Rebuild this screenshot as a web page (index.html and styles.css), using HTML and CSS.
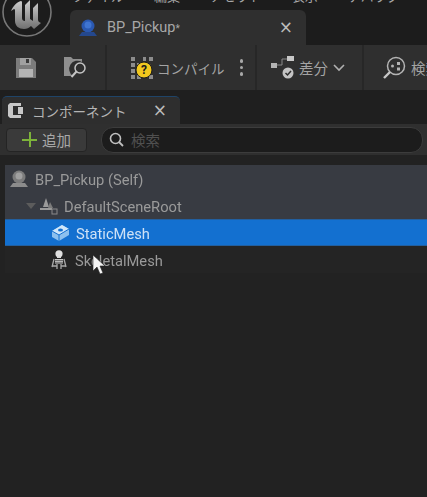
FILE: index.html
```html
<!DOCTYPE html>
<html lang="ja">

<head>
    <meta charset="UTF-8">
    <title>BP_Pickup</title>
    <link rel="stylesheet" href="styles.css">
</head>

<body>
    <!-- タイトルバー -->
    <div class="titlebar">
        <div class="logo">
            <svg width="52" height="52" viewBox="0 0 52 52">
                <defs>
                    <linearGradient id="logo_grad" x1="0" y1="0" x2="0" y2="1">
                        <stop offset="0" stop-color="#d0d0d0" />
                        <stop offset="1" stop-color="#707070" />
                    </linearGradient>
                </defs>
                <circle cx="26" cy="26" r="24" fill="#1c1c1c" stroke="#777777" stroke-width="1.600" />
                <path d="M20 15c-4 1-8 5-10 10l3-2c1 0 1 1 1 2v10c0 5 4 8 9 8 3 0 5-1 7-3l3 3 7-6-2-1c-1-1-1-2-1-3V17l-5 5v13l-3-2V14l-5 5v16c-2 0-3-1-3-3V17c0-1 0-2-1-2z" fill="url(#logo_grad)" />
            </svg>
        </div>
        <div class="menu">
            <span>ファイル</span><span>編集</span><span>アセット</span><span>表示</span><span>デバッグ</span>
        </div>
        <div class="doc_tab">
            <svg width="20" height="20" viewBox="0 0 20 20">
                <circle cx="10" cy="8" r="6.500" fill="#2a58b0" />
                <circle cx="10" cy="7" r="3.500" fill="#3f74d0" />
                <path d="M4 14h12l3 4H1z" fill="#24488e" />
            </svg>
            <span class="doc_name">BP_Pickup<small>*</small></span>
            <span class="close">×</span>
        </div>
    </div>

    <!-- ツールバー -->
    <div class="toolbar">
        <div class="tool_group first">
            <svg width="22" height="22" viewBox="0 0 22 22">
                <path d="M1 1h16l4 4v16H1z" fill="#7c7c7c" />
                <rect x="5" y="1" width="11" height="7" fill="#a0a0a0" />
                <rect x="11" y="2" width="3" height="4" fill="#3a3a3a" />
                <rect x="4" y="12" width="14" height="8" fill="#b4b4b4" />
            </svg>
            <svg width="25" height="23" viewBox="0 0 25 23">
                <path d="M1 1h7l2 2h9v3a8 8 0 0 0-9 14H1z" fill="#8f8f8f" />
                <circle cx="17" cy="12" r="5" fill="none" stroke="#c4c4c4" stroke-width="1.500" />
                <path d="M13.500 15.500l-5 5.500" stroke="#c4c4c4" stroke-width="2" />
            </svg>
        </div>
        <div class="tool_group compile">
            <svg class="compile_icon" width="24" height="24" viewBox="0 0 24 24">
                <path d="M1 1h4v4H1zM13 1h3v4h-3zM19 1h4v4h-4zM7 7h4v4H7zM1 7h4v4H1zM1 13h4v4H1zM1 19h4v4H1zM7 19h4v4H7zM19 19h4v4h-4z" fill="#8c8c8c" />
                <circle cx="14" cy="14" r="8" fill="#f2c81e" stroke="#1c1c1c" />
                <text x="14" y="18" class="q_mark">?</text>
            </svg>
            <span class="tool_text">コンパイル</span>
            <span class="dots"><i></i><i></i><i></i></span>
        </div>
        <div class="tool_group diff">
            <svg width="25" height="23" viewBox="0 0 25 23">
                <rect x="1" y="7" width="6" height="5" fill="#b4b4b4" />
                <rect x="17" y="0" width="7" height="5" fill="#c8c8c8" />
                <path d="M7 9h5V3h5" fill="none" stroke="#8a8a8a" />
                <circle cx="18" cy="17" r="5.500" fill="#c4c4c4" />
                <path d="M15.500 17l2 2 3.500-4" fill="none" stroke="#2f2f2f" stroke-width="1.500" />
            </svg>
            <span class="tool_text">差分</span>
            <svg class="chevron" width="12" height="8" viewBox="0 0 12 8">
                <path d="M1 1l5 5 5-5" fill="none" stroke="#b0b0b0" stroke-width="1.600" />
            </svg>
        </div>
        <div class="tool_group find">
            <svg width="23" height="24" viewBox="0 0 23 24">
                <circle cx="13" cy="10" r="8.500" fill="none" stroke="#b4b4b4" stroke-width="1.500" />
                <path d="M7 16l-6 6" stroke="#c8c8c8" stroke-width="2.400" />
                <circle cx="9.500" cy="10" r="1.500" fill="#b4b4b4" />
                <rect x="14" y="6" width="3" height="3" fill="#b4b4b4" />
                <rect x="14" y="11.500" width="3" height="3" fill="#b4b4b4" />
            </svg>
            <span class="tool_text">検索</span>
        </div>
    </div>

    <!-- コンポーネントパネル -->
    <div class="panel_tabs">
        <div class="panel_tab">
            <svg width="17" height="17" viewBox="0 0 17 17">
                <path d="M1 3l2-2h11v3H6v9h8v3H3l-2-2z" fill="#c8c8c8" />
                <rect x="11" y="5" width="5" height="7" fill="#c8c8c8" />
            </svg>
            <span class="panel_title">コンポーネント</span>
            <span class="close">×</span>
        </div>
    </div>
    <div class="search_row">
        <button class="add_btn"><span class="plus"></span>追加</button>
        <div class="search_box">
            <svg width="15" height="15" viewBox="0 0 15 15">
                <circle cx="6.500" cy="6.500" r="5" fill="none" stroke="#c0c0c0" stroke-width="1.600" />
                <path d="M10 10l4 4" stroke="#c0c0c0" stroke-width="1.800" />
            </svg>
            <span class="placeholder">検索</span>
        </div>
    </div>

    <!-- ツリー -->
    <div class="tree">
        <div class="row self">
            <svg width="20" height="20" viewBox="0 0 20 20">
                <circle cx="10" cy="8" r="6.500" fill="#7c7c7c" />
                <circle cx="10" cy="7" r="3.500" fill="#a0a0a0" />
                <path d="M4 14h12l3 4H1z" fill="#8c8c8c" />
            </svg>
            <span>BP_Pickup (Self)</span>
        </div>
        <div class="row root">
            <span class="arrow"></span>
            <svg width="18" height="18" viewBox="0 0 18 18">
                <path d="M6 1l3 9H3z" fill="#9a9a9a" />
                <path d="M10 5l3 6H8z" fill="#7c7c7c" />
                <rect x="0" y="11" width="12" height="2" fill="#9a9a9a" />
                <rect x="12" y="12" width="5" height="5" fill="none" stroke="#8a8a8a" />
            </svg>
            <span>DefaultSceneRoot</span>
        </div>
        <div class="row mesh selected">
            <svg width="19" height="18" viewBox="0 0 19 18">
                <path d="M1 7l10-6 7 4v6L8 17l-7-4z" fill="#8cc0ee" />
                <path d="M1 7l7 4 10-6-7-4z" fill="#cfe6fa" />
                <path d="M8 11v6" stroke="#1370d0" />
                <path d="M1 7l7 4 10-6" fill="none" stroke="#1370d0" />
                <ellipse cx="9.500" cy="6" rx="2.500" ry="1.500" fill="#1370d0" />
            </svg>
            <span>StaticMesh</span>
        </div>
        <div class="row mesh skeletal">
            <svg width="16" height="19" viewBox="0 0 16 19">
                <circle cx="8" cy="3.800" r="3.600" fill="#e0e0e0" />
                <rect x="6" y="6.500" width="4" height="1.500" fill="#d8d8d8" />
                <rect x="4" y="9" width="8" height="4.500" fill="#c8c8c8" />
                <path d="M4 10.500h8M4 12.300h8" stroke="#333" stroke-width="0.600" />
                <path d="M3 9L1 17M13 9l2 8M1 16h5M10 16h5M6 14v5M10 14v5" stroke="#a8a8a8" stroke-width="1.300" fill="none" />
            </svg>
            <span>SkeletalMesh</span>
        </div>
    </div>

    <!-- カーソル -->
    <svg class="cursor" width="14" height="22" viewBox="0 0 14 22">
        <path d="M1 1v16l4-4 3 7 3-1-3-7h5z" fill="#f4f4f4" stroke="#222" stroke-width="0.600" />
    </svg>
</body>

</html>
```

FILE: styles.css
```css
html,
body {
    margin: 0;
}

body {
    position: relative;
    width: 427px;
    height: 497px;
    overflow: hidden;
    background-color: #222222;
    color: #a8a8a8;
    font-family: "Roboto", "Noto Sans CJK JP", sans-serif;
    font-size: 14.5px;
    filter: blur(0.45px);
}

.titlebar {
    position: relative;
    display: flex;
    align-items: flex-end;
    height: 45px;
    padding-left: 70px;
    box-sizing: border-box;
    background-color: #1c1c1c;
}

.logo {
    position: absolute;
    left: 1px;
    top: -14px;
}

.menu {
    position: absolute;
    left: 72px;
    top: -14px;
    display: flex;
    gap: 30px;
    font-size: 13px;
    color: #a8a8a8;
}

.doc_tab {
    display: flex;
    align-items: center;
    width: 236px;
    height: 35px;
    padding: 0 13px 0 8px;
    box-sizing: border-box;
    background-color: #2f2f2f;
    border-radius: 6px 6px 0 0;
}

.doc_name {
    flex: 1;
    margin-left: 9px;
    color: #a8a8a8;
}

.doc_name small {
    font-size: 10px;
}

.close {
    font-size: 17px;
    line-height: 1;
    font-family: "DejaVu Sans", sans-serif;
    color: #bcbcbc;
}

.toolbar {
    display: flex;
    align-items: center;
    height: 45px;
    background-color: #2f2f2f;
}

.tool_group {
    display: flex;
    flex: none;
    align-items: center;
    height: 100%;
    box-sizing: border-box;
    border-right: 2px solid #272727;
}

.first {
    gap: 26px;
    width: 107px;
    padding-left: 15px;
}

.compile {
    width: 150px;
    padding-left: 23px;
}

.compile .tool_text {
    margin-left: 3px;
    font-size: 13.5px;
}

.diff {
    width: 107px;
    padding-left: 13px;
}

.diff .tool_text {
    margin-left: 4px;
}

.chevron {
    margin-left: 5px;
}

.find {
    gap: 5px;
    padding-left: 19px;
    border-right: none;
}

.tool_text {
    white-space: nowrap;
    color: #a4a4a4;
}

.q_mark {
    font-size: 12px;
    font-weight: bold;
    text-anchor: middle;
    fill: #1c1c1c;
}

.dots {
    display: flex;
    flex-direction: column;
    gap: 3px;
    margin-left: 15px;
}

.dots i {
    width: 3.500px;
    height: 3.500px;
    border-radius: 50%;
    background-color: #a8a8a8;
}

.panel_tabs {
    height: 34px;
    padding: 6px 0 0 2px;
    box-sizing: border-box;
    background-color: #1f1f1f;
}

.panel_tab {
    display: flex;
    align-items: center;
    width: 178px;
    height: 28px;
    padding: 0 13px 0 5px;
    box-sizing: border-box;
    background-color: #2e2e2e;
    border-top: 1px solid #1f4468;
    border-radius: 5px 5px 0 0;
}

.panel_title {
    flex: 1;
    margin-left: 8px;
    font-size: 13.5px;
    color: #b4b4b4;
}

.search_row {
    display: flex;
    align-items: center;
    gap: 14px;
    height: 31px;
    padding: 0 4px 0 6px;
    box-sizing: border-box;
    background-color: #2f2f2f;
}

.add_btn {
    display: flex;
    align-items: center;
    justify-content: center;
    gap: 5px;
    width: 81px;
    height: 24px;
    padding: 0;
    background-color: #3a3a3a;
    border: 1px solid #242424;
    border-radius: 4px;
    font-family: inherit;
    font-size: 14.500px;
    color: #a8a8a8;
}

.plus {
    width: 15px;
    height: 15px;
    background:
        linear-gradient(#7db33a, #7db33a) center / 15px 2px no-repeat,
        linear-gradient(#7db33a, #7db33a) center / 2px 15px no-repeat;
}

.search_box {
    display: flex;
    align-items: center;
    gap: 7px;
    flex: 1;
    height: 24px;
    padding-left: 7px;
    background-color: #1c1c1c;
    border: 1px solid #3c3c3c;
    border-radius: 12px;
}

.placeholder {
    color: #505050;
}

.tree {
    margin: 10px 0 0 5px;
}

.row {
    display: flex;
    align-items: center;
    height: 27px;
    box-sizing: border-box;
    color: #9a9a9a;
}

.row span:last-child {
    margin-left: 6px;
    padding-top: 2px;
    font-size: 14.7px;
}

.self {
    padding-left: 4px;
    background-color: #383b42;
}

.root {
    padding-left: 21px;
    background-color: #383b42;
}

.arrow {
    width: 0;
    height: 0;
    margin-right: 4px;
    border-left: 5px solid transparent;
    border-right: 5px solid transparent;
    border-top: 6px solid #5c5c5c;
}

.mesh {
    padding-left: 46px;
    background-color: #252525;
}

.row.skeletal {
    background-color: #242424;
}

.row.skeletal span:last-child {
    margin-left: 8px;
}

.selected {
    background-color: #1370d0;
    color: #cfe2f6;
    border-top: 1px solid #225f9f;
    border-bottom: 1px solid #225f9f;
}

.cursor {
    position: absolute;
    left: 92px;
    top: 254px;
}
```
